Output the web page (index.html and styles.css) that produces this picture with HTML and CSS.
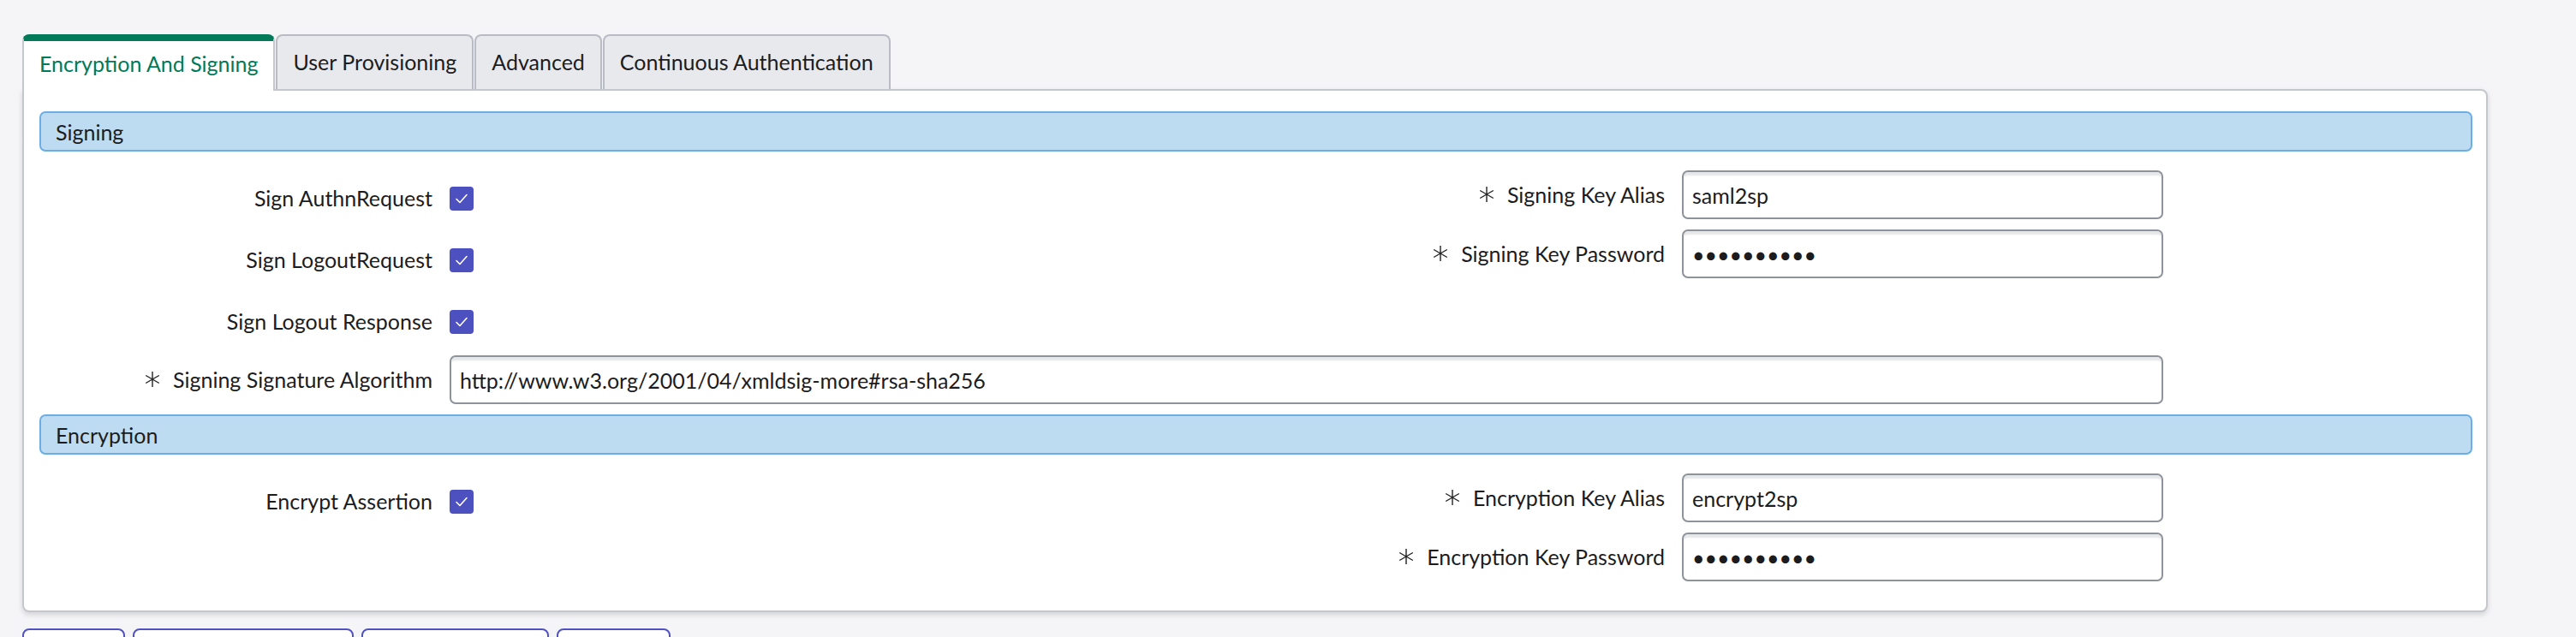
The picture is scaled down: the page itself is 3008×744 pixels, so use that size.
FILE: index.html
```html
<!DOCTYPE html>
<html lang="en">
<head>
    <meta charset="UTF-8">
    <title>Encryption And Signing</title>
    <link rel="stylesheet" href="styles.css">
</head>
<body>

    <div class="page">
        <div class="tabs">
            <div class="tab tab--active">Encryption And Signing</div>
            <div class="tab">User Provisioning</div>
            <div class="tab">Advanced</div>
            <div class="tab">Continuous Authentication</div>
        </div>

        <div class="panel">
            <div class="section__header">Signing</div>
            <div class="section__body">
                <div class="section__cols">
                    <div class="col col--left">
                        <div class="row">
                            <label class="row__label">Sign AuthnRequest</label>
                            <div class="row__field"><span class="check"><svg viewBox="0 0 28 28" width="28" height="28"><path d="M8 14.5l4 4 8-9" fill="none" stroke="#fff" stroke-width="1.6" stroke-linecap="round" stroke-linejoin="round"/></svg></span></div>
                        </div>
                        <div class="row">
                            <label class="row__label">Sign LogoutRequest</label>
                            <div class="row__field"><span class="check"><svg viewBox="0 0 28 28" width="28" height="28"><path d="M8 14.5l4 4 8-9" fill="none" stroke="#fff" stroke-width="1.6" stroke-linecap="round" stroke-linejoin="round"/></svg></span></div>
                        </div>
                        <div class="row">
                            <label class="row__label">Sign Logout Response</label>
                            <div class="row__field"><span class="check"><svg viewBox="0 0 28 28" width="28" height="28"><path d="M8 14.5l4 4 8-9" fill="none" stroke="#fff" stroke-width="1.6" stroke-linecap="round" stroke-linejoin="round"/></svg></span></div>
                        </div>
                    </div>
                    <div class="col col--right">
                        <div class="row">
                            <label class="row__label"><svg class="req" viewBox="0 0 20 20" width="20" height="20"><path d="M10 1v18M2.2 5.5l15.6 9M2.2 14.5l15.6-9" stroke="#222" stroke-width="1.4"/></svg>Signing Key Alias</label>
                            <input class="input" type="text" value="saml2sp">
                        </div>
                        <div class="row">
                            <label class="row__label"><svg class="req" viewBox="0 0 20 20" width="20" height="20"><path d="M10 1v18M2.2 5.5l15.6 9M2.2 14.5l15.6-9" stroke="#222" stroke-width="1.4"/></svg>Signing Key Password</label>
                            <input class="input" type="password" value="xxxxxxxxxx">
                        </div>
                    </div>
                </div>
                <div class="row row--wide">
                    <label class="row__label"><svg class="req" viewBox="0 0 20 20" width="20" height="20"><path d="M10 1v18M2.2 5.5l15.6 9M2.2 14.5l15.6-9" stroke="#222" stroke-width="1.4"/></svg>Signing Signature Algorithm</label>
                    <input class="input" type="text" value="http://www.w3.org/2001/04/xmldsig-more#rsa-sha256">
                </div>
            </div>

            <div class="section__header section__header--next">Encryption</div>
            <div class="section__body">
                <div class="section__cols">
                    <div class="col col--left">
                        <div class="row">
                            <label class="row__label">Encrypt Assertion</label>
                            <div class="row__field"><span class="check"><svg viewBox="0 0 28 28" width="28" height="28"><path d="M8 14.5l4 4 8-9" fill="none" stroke="#fff" stroke-width="1.6" stroke-linecap="round" stroke-linejoin="round"/></svg></span></div>
                        </div>
                    </div>
                    <div class="col col--right">
                        <div class="row">
                            <label class="row__label"><svg class="req" viewBox="0 0 20 20" width="20" height="20"><path d="M10 1v18M2.2 5.5l15.6 9M2.2 14.5l15.6-9" stroke="#222" stroke-width="1.4"/></svg>Encryption Key Alias</label>
                            <input class="input" type="text" value="encrypt2sp">
                        </div>
                        <div class="row">
                            <label class="row__label"><svg class="req" viewBox="0 0 20 20" width="20" height="20"><path d="M10 1v18M2.2 5.5l15.6 9M2.2 14.5l15.6-9" stroke="#222" stroke-width="1.4"/></svg>Encryption Key Password</label>
                            <input class="input" type="password" value="xxxxxxxxxx">
                        </div>
                    </div>
                </div>
            </div>
        </div>

        <div class="actions">
            <button class="btn btn--a"></button>
            <button class="btn btn--b"></button>
            <button class="btn btn--c"></button>
            <button class="btn btn--d"></button>
        </div>
    </div>

</body>
</html>
```

FILE: styles.css
```css
html {
  box-sizing: border-box;
}

*,
*::before,
*::after {
  box-sizing: inherit;
}

body {
  margin: 0;
  background-color: #f5f5f7;
  color: #1c1c1e;
  font-family: Lato, "Open Sans", sans-serif;
  font-size: 25px;
  overflow: hidden;
}

.page {
  padding: 40px 0 0 26px;
  width: 2905px;
}

/* Tabs */

.tabs {
  display: flex;
  align-items: flex-end;
  gap: 1px;
  position: relative;
  z-index: 1;
}

.tab {
  height: 64px;
  padding: 0 18px 2px;
  display: flex;
  align-items: center;
  background-color: #e8e9ed;
  border: 2px solid #b9bcc4;
  border-bottom: 0;
  border-radius: 8px 8px 0 0;
  white-space: nowrap;
}

.tab--active {
  height: 66px;
  margin-bottom: -2px;
  padding-bottom: 6px;
  background-color: #fff;
  border-color: #c4c7cd;
  border-top: 8px solid #007a58;
  color: #007a58;
}

/* Panel */

.panel {
  background-color: #fff;
  border: 2px solid #c4c7cd;
  border-radius: 0 8px 8px 8px;
  box-shadow: 0 3px 6px rgba(0, 0, 0, 0.14);
  padding: 24px 16px 34px 18px;
}

.section__header {
  height: 47px;
  display: flex;
  align-items: center;
  padding-left: 17px;
  background-color: #bddcf1;
  border: 2px solid #6caee3;
  border-radius: 7px;
}

.section__header--next {
  margin-top: 12px;
}

.section__body {
  padding-top: 22px;
}

.section__cols {
  display: flex;
  align-items: flex-start;
  gap: 20px;
}

.col {
  display: flex;
  flex-direction: column;
}

.col--left {
  width: 1419px;
  padding-top: 4px;
  gap: 15px;
}

.col--right {
  width: 1041px;
  gap: 12px;
}

.row {
  display: grid;
  grid-template-columns: 459px 1fr;
  column-gap: 20px;
  align-items: center;
  height: 57px;
}

.row--wide {
  width: 2480px;
  margin-top: 11px;
}

.row__label {
  display: flex;
  align-items: center;
  justify-content: flex-end;
  gap: 14px;
  padding-bottom: 2px;
  white-space: nowrap;
}

.req {
  flex: none;
}

.row__field {
  display: flex;
  align-items: center;
}

.check {
  width: 28px;
  height: 28px;
  display: block;
  background-color: #4d50bf;
  border-radius: 4px;
}

.check svg {
  display: block;
}

.input {
  height: 57px;
  width: 100%;
  padding: 0 10px;
  border: 2px solid #8d929b;
  border-radius: 7px;
  background-color: #fff;
  box-shadow: inset 0 6px 2px -2px #e6e7e8;
  color: #1c1c1e;
  font-family: inherit;
  font-size: 25px;
  outline: none;
}

/* Bottom buttons */

.actions {
  display: flex;
  gap: 9px;
  margin-top: 19px;
}

.btn {
  height: 52px;
  background-color: #fff;
  border: 2px solid #4f52c0;
  border-radius: 8px;
  padding: 0;
}

.btn--a {
  width: 120px;
}

.btn--b {
  width: 258px;
}

.btn--c {
  width: 219px;
}

.btn--d {
  width: 133px;
}
```
